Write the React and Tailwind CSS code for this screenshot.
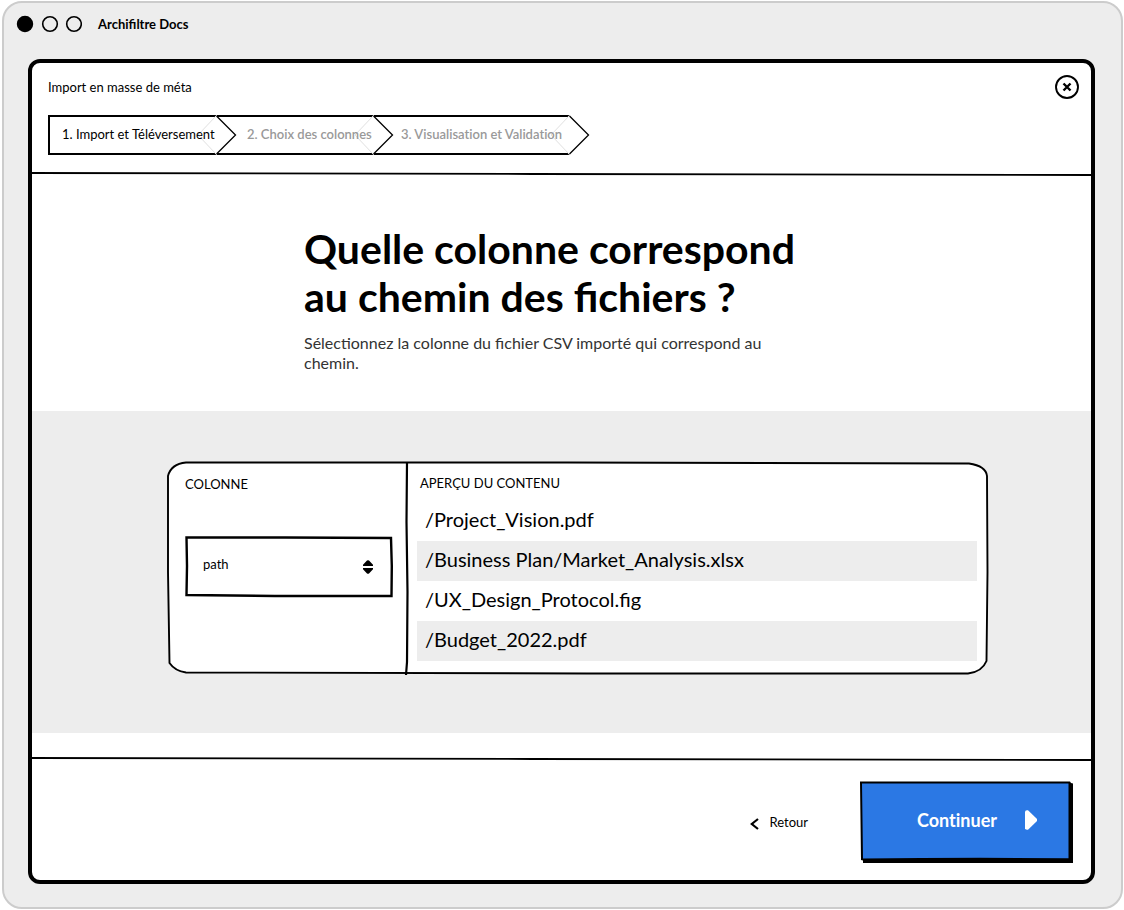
const STEPS = [
  { label: "1. Import et Téléversement", width: "w-[169px] pl-3 border-l-2", tone: "text-black" },
  { label: "2. Choix des colonnes", width: "w-[157px] pl-[30px]", tone: "text-[#999] font-semibold" },
  { label: "3. Visualisation et Validation", width: "w-[196px] pl-[27px]", tone: "text-[#999] font-semibold" },
];

const FILES = [
  "/Project_Vision.pdf",
  "/Business Plan/Market_Analysis.xlsx",
  "/UX_Design_Protocol.fig",
  "/Budget_2022.pdf",
];

function SketchRule() {
  return (
    <svg className="block h-1 w-full overflow-visible" viewBox="0 0 1059 4" preserveAspectRatio="none" aria-hidden="true">
      <path d="M-3 1 L500 2 L1059 3" fill="none" stroke="#000" strokeWidth="1.800" vectorEffect="non-scaling-stroke" />
    </svg>
  );
}

function StepTip() {
  return (
    <svg className="absolute -top-0.5 -right-5 h-10 w-10" viewBox="0 0 40 40" aria-hidden="true">
      <path d="M19.500 0 L39.500 20 L19.500 40 L0 20 Z" fill="#fff" />
      <path d="M19 1 L1 20 L19 39" fill="none" stroke="#d8d8d8" strokeWidth="0.800" />
      <path d="M19.500 1 L38.500 20 L19.500 39" fill="none" stroke="#000" strokeWidth="1.300" />
    </svg>
  );
}

function Stepper() {
  return (
    <ol className="mt-4 flex">
      {STEPS.map((step, i) => (
        <li
          key={step.label}
          aria-current={i === 0 ? "step" : undefined}
          className={`relative flex h-10 shrink-0 items-center border-y-2 border-black pb-0.5 text-[13px] leading-5 [font-variant-ligatures:none] ${step.width} ${step.tone}`}
        >
          <StepTip />
          <span className="relative z-10 whitespace-nowrap">{step.label}</span>
        </li>
      ))}
    </ol>
  );
}

function TitleBar() {
  return (
    <div className="flex h-[42px] items-center gap-4 pl-3">
      <svg className="h-[18px] w-[66px]" viewBox="0 0 66 18" fill="none" stroke="#000" strokeWidth="1.600" aria-hidden="true">
        <circle cx="9" cy="9" r="7.400" fill="#000" />
        <circle cx="34" cy="9" r="7.300" />
        <circle cx="58" cy="9" r="7.300" />
      </svg>
      <span className="text-[13px] leading-5 font-bold">Archifiltre Docs</span>
    </div>
  );
}

function ColumnSelect() {
  return (
    <div className="relative mt-[42px] h-[61px]">
      <svg className="absolute inset-0 h-full w-full overflow-visible" viewBox="0 0 208 61" preserveAspectRatio="none" aria-hidden="true">
        <path d="M1.500 1.500 L100 1.500 L206 2 L206.800 30 L206.500 60 L90 60 L1.500 59 L2 30 Z" fill="#fff" stroke="#000" strokeWidth="2.400" vectorEffect="non-scaling-stroke" />
      </svg>
      <select
        id="column"
        defaultValue="path"
        className="relative h-full w-full appearance-none bg-transparent pr-10 pb-1 pl-[18px] text-[13px] text-black"
      >
        <option value="path">path</option>
      </select>
      <svg className="pointer-events-none absolute top-1/2 right-5 h-[14px] w-[10px] -translate-y-1/2" viewBox="0 0 10 14" aria-hidden="true">
        <path d="M0 6 V4.700 L4 0.600 Q5 -0.300 6 0.600 L10 4.700 V6 Z M0 8 V9.300 L4 13.400 Q5 14.300 6 13.400 L10 9.300 V8 Z" />
      </svg>
    </div>
  );
}

function PreviewCard() {
  return (
    <section className="relative flex min-h-[212px]">
      <svg className="absolute inset-0 h-full w-full overflow-visible" viewBox="0 0 821 212" preserveAspectRatio="none" aria-hidden="true">
        <path
          d="M19 0.500 L400 0.500 L802 1.500 Q819 4 820 14 L820.500 110 L819.500 199 Q815 210 801 211.500 L420 211.500 L19 210.500 Q8 209 2.500 201 L1 110 L1 14 Q4 2 19 0.500 Z"
          fill="#fff"
          stroke="#000"
          strokeWidth="1.900"
          vectorEffect="non-scaling-stroke"
        />
        <path d="M240 0 L239.500 60 L240.500 130 L240 200 L239 213" fill="none" stroke="#000" strokeWidth="2.200" vectorEffect="non-scaling-stroke" />
      </svg>
      <div className="relative w-60 shrink-0 pt-3 pr-3.5 pl-[18px]">
        <label htmlFor="column" className="block text-[13px] leading-5">COLONNE</label>
        <ColumnSelect />
      </div>
      <div className="relative flex-1 pt-[11px] pr-[11px] pb-[13px] pl-2.5">
        <table className="w-full border-collapse text-left">
          <thead>
            <tr>
              <th className="h-7 pl-[3px] align-top text-[13px] leading-5 font-normal">APERÇU DU CONTENU</th>
            </tr>
          </thead>
          <tbody>
            {FILES.map((file) => (
              <tr key={file} className="even:bg-[#ededed]">
                <td className="h-10 pb-1 pl-2 text-xl leading-5">{file}</td>
              </tr>
            ))}
          </tbody>
        </table>
      </div>
    </section>
  );
}

function Footer() {
  return (
    <footer className="flex items-start justify-end gap-[52px] pt-5 pr-[18px] pb-[17px]">
      <button type="button" className="mt-[31px] flex items-center gap-2.5 text-[13px] leading-5">
        <svg className="mt-1 h-3 w-[9px]" viewBox="0 0 9 12" fill="none" stroke="#000" strokeWidth="2.200" aria-hidden="true">
          <path d="M8 1 L1.800 6 L8 11" />
        </svg>
        Retour
      </button>
      <button type="button" className="relative flex h-[82px] w-[213px] items-center justify-end gap-7 pr-9 pb-1 text-lg font-bold text-white [font-variant-ligatures:none]">
        <svg className="absolute inset-0 h-full w-full" viewBox="0 0 213 82" preserveAspectRatio="none" aria-hidden="true">
          <path d="M0 0.500 L210 0.500 L211 2 L213 2.500 V82 H3 V79.500 L1 79 Z" />
          <path d="M2 2.500 L208.500 2.500 L208.500 77.200 L120 76.800 L60 77 L3 77.500 Z" fill="#2b78e4" />
        </svg>
        <span className="relative">Continuer</span>
        <svg className="relative h-5 w-3" viewBox="0 0 12 20" fill="#fff" aria-hidden="true">
          <path d="M0 1.500 Q0.500 0 3 0.200 L12 9 V11 L3 19.800 Q0.500 20 0 18.500 Z" />
        </svg>
      </button>
    </footer>
  );
}

export default function App() {
  return (
    <div className="flex min-h-screen bg-white p-px pl-0.5 font-[Lato,'Noto_Sans',sans-serif] text-black">
      <div className="flex flex-1 flex-col rounded-[20px] border-2 border-[#ccc] bg-[#ededed] pb-[23px]">
        <TitleBar />
        <main className="mt-3.5 mr-[26px] ml-6 flex flex-1 flex-col rounded-xl border-4 border-black bg-white">
          <header className="px-4 pt-3.5 pb-[17px]">
            <div className="flex items-start justify-between">
              <p className="text-[13px] leading-5">Import en masse de méta</p>
              <button type="button" aria-label="Fermer" className="-mt-0.5 -mr-1">
                <svg className="h-6 w-6" viewBox="0 0 24 24" fill="none" stroke="#000" aria-hidden="true">
                  <circle cx="12" cy="12" r="11" strokeWidth="1.900" />
                  <path d="M8.500 8.500 L15.500 15.500 M15.500 8.500 L8.500 15.500" strokeWidth="2.400" />
                </svg>
              </button>
            </div>
            <Stepper />
          </header>
          <SketchRule />
          <div className="pt-[49px] pb-[38px] pl-[272px]">
            <h1 className="text-[41px] leading-12 font-bold">
              Quelle colonne correspond<br />au chemin des fichiers ?
            </h1>
            <p className="mt-3 text-base leading-5 text-[#333]">
              Sélectionnez la colonne du fichier CSV importé qui correspond au<br />chemin.
            </p>
          </div>
          <div className="bg-[#ededed] pt-[51px] pr-[103px] pb-[59px] pl-[135px]">
            <PreviewCard />
          </div>
          <div className="mt-6">
            <SketchRule />
          </div>
          <Footer />
        </main>
      </div>
    </div>
  );
}
